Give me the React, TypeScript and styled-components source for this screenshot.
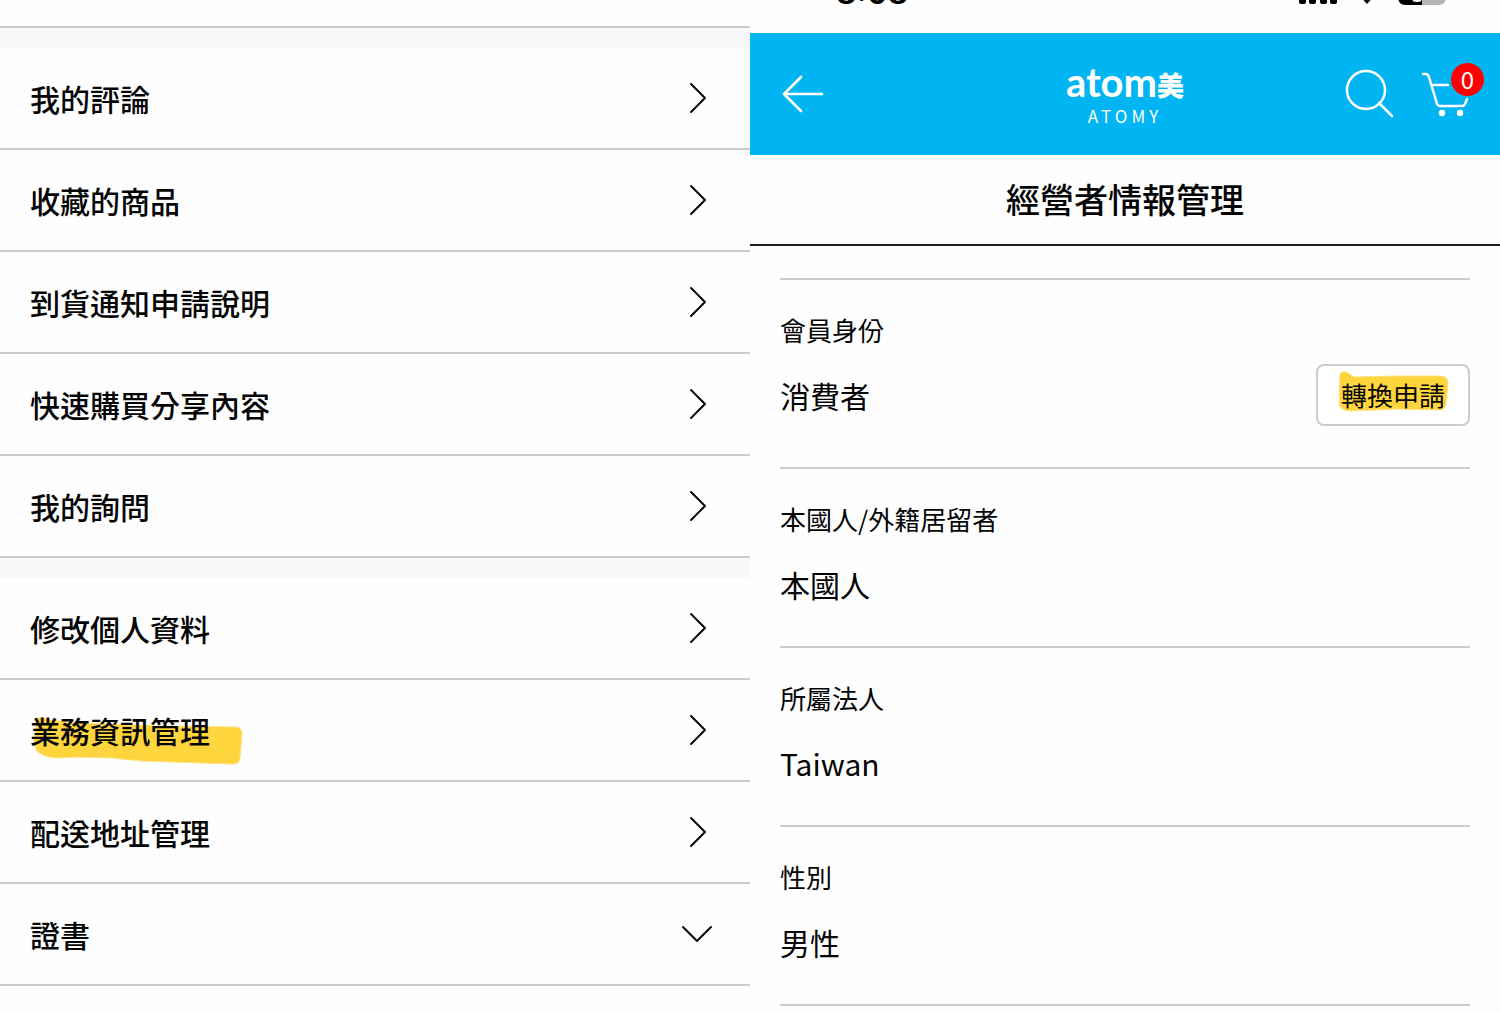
import React from "react";
import styled, { createGlobalStyle } from "styled-components";

const GlobalStyle = createGlobalStyle`
  *, *::before, *::after { box-sizing: border-box; }
  body {
    margin: 0;
    background: #fefefe;
    color: #050505;
    font-family: "Noto Sans CJK KR", "Noto Sans CJK TC", sans-serif;
  }
  ul, dl, dd, h1 { margin: 0; padding: 0; }
`;

const Screens = styled.main`
  display: grid;
  grid-template-columns: 1fr 1fr;
  align-items: start;
`;

const Panel = styled.section`
  min-width: 0;
`;

const PanelTop = styled.div`
  height: 28px;
  border-bottom: 2px solid #cccccc;
`;

const Menu = styled.ul`
  list-style: none;
  border-top: 20px solid #f8f8f8;
`;

const MenuItem = styled.li`
  border-bottom: 2px solid #cccccc;
`;

const MenuLink = styled.a`
  display: flex;
  align-items: center;
  justify-content: space-between;
  height: 100px;
  padding: 0 38px 0 30px;
  color: inherit;
  text-decoration: none;
  font-size: 30px;
  font-weight: 500;
  line-height: 44px;
`;

const MenuToggle = styled(MenuLink)`
  width: 100%;
  border: 0;
  background: none;
  font-family: inherit;
  cursor: pointer;
`;

const Marked = styled.span`
  position: relative;
  z-index: 0;
`;

const Marker = styled.svg<{ $top: number; $left: number }>`
  position: absolute;
  z-index: -1;
  top: ${(p) => p.$top}px;
  left: ${(p) => p.$left}px;
  fill: #ffd53d;
  stroke: #ffe27a;
  stroke-width: 1;
`;

const LineIcon = styled.svg<{ $weight?: number }>`
  display: block;
  flex: none;
  fill: none;
  stroke: currentColor;
  stroke-width: ${(p) => p.$weight ?? 2};
  stroke-linecap: round;
  stroke-linejoin: round;
`;

const StatusBar = styled.div`
  display: flex;
  align-items: flex-end;
  justify-content: space-between;
  height: 33px;
  padding: 0 54px 20px 86px;
  overflow: hidden;
  color: #000000;
`;

const Clock = styled.span`
  padding-bottom: 4px;
  font-family: Inter, sans-serif;
  font-size: 32px;
  font-weight: 600;
  line-height: 32px;
`;

const StatusIcons = styled.svg`
  display: block;
  flex: none;
`;

const AppBar = styled.header`
  display: grid;
  grid-template-columns: 1fr auto 1fr;
  align-items: center;
  height: 122px;
  padding: 0 31px;
  background: #00b5f1;
  color: #ffffff;
`;

const IconButton = styled.button`
  position: relative;
  display: block;
  padding: 0;
  border: 0;
  background: none;
  color: inherit;
  cursor: pointer;
`;

const Actions = styled.div`
  display: flex;
  justify-content: flex-end;
  gap: 26px;
`;

const Badge = styled.span`
  position: absolute;
  top: -6px;
  right: -15px;
  width: 33px;
  height: 33px;
  border-radius: 50%;
  background: #ff0000;
  font-family: "Noto Sans CJK KR", sans-serif;
  font-size: 24px;
  line-height: 32px;
  text-align: center;
`;

const Logo = styled.a`
  display: flex;
  flex-direction: column;
  align-items: center;
  color: inherit;
  text-decoration: none;
`;

const LogoName = styled.span`
  display: flex;
  align-items: flex-end;
  font-family: Lato, sans-serif;
  font-size: 40px;
  font-weight: 700;
  line-height: 44px;
`;

const LogoHan = styled.span`
  font-family: "Noto Sans CJK KR", sans-serif;
  font-size: 27px;
  font-weight: 900;
  line-height: 38px;
`;

const LogoSub = styled.span`
  font-size: 17px;
  line-height: 24px;
  letter-spacing: 4px;
`;

const PageTitle = styled.h1`
  height: 91px;
  border-bottom: 2px solid #222222;
  font-size: 34px;
  font-weight: 500;
  line-height: 88px;
  text-align: center;
`;

const Details = styled.dl`
  margin: 32px 30px 0;
  border-bottom: 2px solid #cccccc;
`;

const Detail = styled.div<{ $action?: boolean }>`
  padding: 30px 0 ${(p) => (p.$action ? 41 : 31)}px;
  border-top: 2px solid #cccccc;
`;

const Term = styled.dt`
  margin-bottom: 14px;
  font-size: 26px;
  line-height: 40px;
`;

const Value = styled.dd`
  display: flex;
  align-items: center;
  justify-content: space-between;
  height: 62px;
  font-size: 30px;
  line-height: 44px;
`;

const OutlineButton = styled.button`
  height: 62px;
  padding: 0 23px;
  border: 2px solid #cccccc;
  border-radius: 8px;
  background: #ffffff;
  color: inherit;
  font-family: inherit;
  font-size: 26px;
  line-height: 40px;
  cursor: pointer;
`;

const ChevronRight = () => (
  <LineIcon width="28" height="32" viewBox="0 0 28 32" aria-hidden="true">
    <path d="M7 2 21 16 7 30" />
  </LineIcon>
);

const ChevronDown = () => (
  <LineIcon width="30" height="18" viewBox="0 0 30 18" aria-hidden="true">
    <path d="M1 2 15 16 29 2" />
  </LineIcon>
);

const orders = ["我的評論", "收藏的商品", "到貨通知申請說明", "快速購買分享內容", "我的詢問"];
const account = [
  { label: "修改個人資料" },
  { label: "業務資訊管理", marked: true },
  { label: "配送地址管理" },
];

const details = [
  { term: "會員身份", value: "消費者", action: "轉換申請" },
  { term: "本國人/外籍居留者", value: "本國人" },
  { term: "所屬法人", value: "Taiwan" },
  { term: "性別", value: "男性" },
];

export default function App() {
  return (
    <>
      <GlobalStyle />
      <Screens>
        <Panel>
          <PanelTop />
          <Menu>
            {orders.map((label) => (
              <MenuItem key={label}>
                <MenuLink href="#">
                  {label}
                  <ChevronRight />
                </MenuLink>
              </MenuItem>
            ))}
          </Menu>
          <Menu>
            {account.map(({ label, marked }) => (
              <MenuItem key={label}>
                <MenuLink href="#">
                  {marked ? (
                    <Marked>
                      {label}
                      <Marker $top={8} $left={2} width="212" height="50" viewBox="0 0 212 50" aria-hidden="true">
                        <path d="M5 2Q9 0 14 3L40 7 80 8 130 10 204 11Q210 12 210 17L208 42Q207 48 201 48L170 47 110 45 80 42 45 41 25 42Q10 41 4 34L2 25Z" />
                      </Marker>
                    </Marked>
                  ) : (
                    label
                  )}
                  <ChevronRight />
                </MenuLink>
              </MenuItem>
            ))}
            <MenuItem>
              <MenuToggle as="button" type="button">
                證書
                <ChevronDown />
              </MenuToggle>
            </MenuItem>
          </Menu>
        </Panel>

        <Panel>
          <StatusBar>
            <Clock>8:08</Clock>
            <StatusIcons width="148" height="28" viewBox="0 0 148 28" aria-hidden="true">
              <rect x="1" y="12" width="7" height="7" rx="2" />
              <rect x="11" y="9" width="7" height="10" rx="2" />
              <rect x="22" y="5" width="7" height="14" rx="2" />
              <rect x="32" y="0" width="7" height="19" rx="2" />
              <path d="M60 9 69 19 78 9Q69 3 60 9Z" />
              <path d="M108 0H124V20H108Q100 20 100 12V0Z" />
              <path d="M124 0H148V12Q148 20 140 20H124Z" fill="#b5b5b5" />
              <path d="M115 15Q119 17 123 15" fill="none" stroke="#ffffff" strokeWidth="2" />
            </StatusIcons>
          </StatusBar>
          <AppBar>
            <IconButton type="button" aria-label="Back">
              <LineIcon $weight={2.6} width="44" height="40" viewBox="0 0 44 40">
                <path d="M20 3 3 20 20 37M3 20H41" />
              </LineIcon>
            </IconButton>
            <Logo href="#">
              <LogoName>
                atom<LogoHan>美</LogoHan>
              </LogoName>
              <LogoSub>ATOMY</LogoSub>
            </Logo>
            <Actions>
              <IconButton type="button" aria-label="Search">
                <LineIcon $weight={2.5} width="50" height="50" viewBox="0 0 50 50">
                  <circle cx="21" cy="21" r="19" />
                  <path d="M34 34 47 47" />
                </LineIcon>
              </IconButton>
              <IconButton type="button" aria-label="Cart">
                <LineIcon $weight={2.5} width="48" height="50" viewBox="0 0 48 50">
                  <path d="M2 5H5Q7 5 8 8L16 35Q17 37 19 37H41Q43 37 44 35L46 30M12 16H27" />
                  <circle cx="21" cy="44" r="2" fill="currentColor" />
                  <circle cx="39" cy="44" r="2" fill="currentColor" />
                </LineIcon>
                <Badge>0</Badge>
              </IconButton>
            </Actions>
          </AppBar>
          <PageTitle>經營者情報管理</PageTitle>
          <Details>
            {details.map(({ term, value, action }) => (
              <Detail key={term} $action={Boolean(action)}>
                <Term>{term}</Term>
                <Value>
                  {value}
                  {action && (
                    <OutlineButton type="button">
                      <Marked>
                        {action}
                        <Marker $top={-6} $left={-4} width="114" height="44" viewBox="0 0 114 44" aria-hidden="true">
                          <path d="M3 4Q7 0 11 3L17 7 60 6 104 6Q111 7 111 13L109 34Q108 40 102 40L60 39 14 41Q4 41 2 34Z" />
                        </Marker>
                      </Marked>
                    </OutlineButton>
                  )}
                </Value>
              </Detail>
            ))}
          </Details>
        </Panel>
      </Screens>
    </>
  );
}
